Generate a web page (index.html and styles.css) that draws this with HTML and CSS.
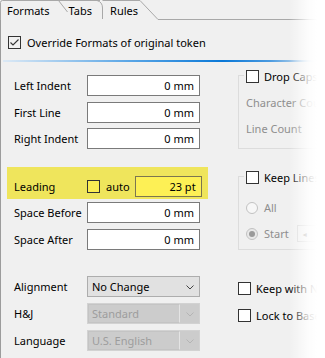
FILE: index.html
```html
<!DOCTYPE html>
<html>
<head>
<meta charset="utf-8">
<link rel="stylesheet" href="styles.css">
</head>
<body>
<div class="tabstrip">
  <svg class="tabshapes" width="325" height="20" viewBox="0 0 325 20">
    <path d="M56 0.5 H100" fill="none" stroke="#a8a8a8"/>
    <path d="M97 0.5 Q102.5 2 102.5 8 V19 M102.5 0.5 H140 L158 19.5 H325" fill="none" stroke="#a8a8a8"/>
    <path d="M0.5 20 V2.5 Q0.5 0.5 2.5 0.5 H58.5 L67.5 12" fill="none" stroke="#a8a8a8"/>
  </svg>
  <span class="tab t-formats">Formats</span>
  <span class="tab t-tabs">Tabs</span>
  <span class="tab t-rules">Rules</span>
</div>
<div class="panel">
  <div class="override">
    <span class="cb"><svg width="11" height="11" viewBox="0 0 11 11"><polyline points="1.5,5.5 4,8 9.5,2.5" fill="none" stroke="#333" stroke-width="1.1"/></svg></span>
    <span>Override Formats of original token</span>
  </div>
  <div class="sep"></div>
  <div class="cols">
    <div class="left">
      <div class="rows">
        <div class="row"><span class="lbl">Left Indent</span><span class="inp">0 mm</span></div>
        <div class="row"><span class="lbl">First Line</span><span class="inp">0 mm</span></div>
        <div class="row"><span class="lbl">Right Indent</span><span class="inp">0 mm</span></div>
      </div>
      <div class="leading">
        <span class="lbl">Leading</span>
        <span class="cb ycb"></span>
        <span class="auto">auto</span>
        <span class="inp yinp">23 pt</span>
      </div>
      <div class="rows after-lead">
        <div class="row"><span class="lbl">Space Before</span><span class="inp">0 mm</span></div>
        <div class="row"><span class="lbl">Space After</span><span class="inp">0 mm</span></div>
      </div>
      <div class="rows selects">
        <div class="row"><span class="lbl">Alignment</span><span class="sel"><span class="seltxt">No Change</span><span class="arrow"><svg width="8" height="5" viewBox="0 0 8 5"><polyline points="0.5,0.5 4,4 7.5,0.5" fill="none" stroke="#444"/></svg></span></span></div>
        <div class="row"><span class="lbl">H&amp;J</span><span class="sel dis"><span class="seltxt">Standard</span><span class="arrow"><svg width="8" height="5" viewBox="0 0 8 5"><polyline points="0.5,0.5 4,4 7.5,0.5" fill="none" stroke="#b4b4b4"/></svg></span></span></div>
        <div class="row"><span class="lbl">Language</span><span class="sel dis"><span class="seltxt">U.S. English</span><span class="arrow"><svg width="8" height="5" viewBox="0 0 8 5"><polyline points="0.5,0.5 4,4 7.5,0.5" fill="none" stroke="#b4b4b4"/></svg></span></span></div>
      </div>
    </div>
    <div class="right">
      <div class="group">
        <div class="legend"><span class="cb"></span><span>Drop Caps</span></div>
        <div class="gline first dim">Character Count</div>
        <div class="gline second dim">Line Count</div>
      </div>
      <div class="group g2">
        <div class="legend"><span class="cb"></span><span>Keep Lines Together</span></div>
        <div class="radio-row r-all"><span class="radio"></span><span class="dim">All</span></div>
        <div class="radio-row r-start"><span class="radio on"></span><span class="dim">Start</span><span class="spin"><span class="spinarrow">&#9666;</span></span></div>
      </div>
      <div class="chkline k1"><span class="cb"></span><span>Keep with Next</span></div>
      <div class="chkline k2"><span class="cb"></span><span>Lock to Baseline Grid</span></div>
    </div>
  </div>
</div>
<div class="fade"></div>
</body>
</html>
```
FILE: styles.css
```css
html, body {
  margin: 0;
  padding: 0;
}
body {
  width: 325px;
  height: 358px;
  overflow: hidden;
  position: relative;
  background: #f0f0f0;
  font-family: "Noto Sans", "DejaVu Sans", sans-serif;
  font-size: 11px;
  line-height: 15px;
  color: #000;
}
.tabstrip {
  position: relative;
  height: 20px;
  display: flex;
  align-items: flex-start;
}
.tabshapes {
  position: absolute;
  left: 0;
  top: 0;
}
.tab {
  position: relative;
  padding-top: 3px;
}
.t-formats { margin-left: 7px; }
.t-tabs { margin-left: 19px; }
.t-rules { margin-left: 18px; }

.panel {
  border-left: 1px solid #9c9c9c;
  border-bottom: 1px solid #9c9c9c;
  height: 335px;
  padding-top: 16px;
  box-sizing: content-box;
}
.override {
  margin-left: 7px;
  height: 13px;
  display: flex;
  align-items: center;
  gap: 6px;
}
.cb {
  width: 13px;
  height: 13px;
  box-sizing: border-box;
  border: 1px solid #333;
  background: #fff;
  display: inline-flex;
  align-items: center;
  justify-content: center;
  flex: none;
}
.override .cb { background: #f0f0f0; }
.sep {
  margin: 11px 0 0 2px;
  width: 314px;
  height: 2px;
  background: linear-gradient(to right, #dce9f5 0%, #5aa6e6 40%, #0a78d7 70%, #4a9ae0 85%, #f0f0f0 100%);
}
.cols {
  display: flex;
  margin-top: 13px;
}
.left {
  margin-left: 6px;
  width: 201px;
  flex: none;
}
.rows {
  display: flex;
  flex-direction: column;
  gap: 5.5px;
}
.row {
  display: flex;
  align-items: center;
  height: 21px;
  padding-left: 7px;
}
.lbl {
  width: 73px;
  flex: none;
}
.inp {
  width: 113px;
  height: 21px;
  box-sizing: border-box;
  border: 1px solid #7a7a7a;
  background: #fff;
  text-align: right;
  padding-right: 5px;
  line-height: 19px;
}
.leading {
  margin-top: 18px;
  background: #efe55c;
  height: 32px;
  box-sizing: border-box;
  padding: 9px 0 2px 7px;
  display: flex;
  align-items: center;
}
.leading .lbl { width: 73px; }
.ycb {
  background: #fbee52;
  border-color: #333;
}
.auto { margin-left: 6px; }
.yinp {
  margin-left: 5px;
  width: 67px;
  background: #fdf055;
  border-color: #7c7650;
}
.after-lead { margin-top: 3px; gap: 6px; }
.selects { margin-top: 26px; gap: 6px; }
.sel {
  width: 113px;
  height: 21px;
  box-sizing: border-box;
  border: 1px solid #adadad;
  background: #e1e1e1;
  display: flex;
  align-items: stretch;
}
.seltxt {
  flex: 1;
  padding-left: 4px;
  line-height: 19px;
}
.arrow {
  width: 19px;
  display: flex;
  align-items: center;
  justify-content: center;
  padding-top: 1px;
}
.sel.dis {
  border-color: #d2d2d2;
  background: #cccccc;
  color: #9d9d9d;
}
.sel.dis .seltxt {
  border: 1px solid #c4c4c4;
  border-right: 1px solid #e4e4e4;
  padding-left: 3px;
  line-height: 17px;
}

.right {
  margin-left: 30px;
  width: 87px;
  flex: none;
  overflow: hidden;
  white-space: nowrap;
}
.group {
  border: 1px solid #dcdcdc;
  width: 150px;
  height: 74px;
  box-sizing: border-box;
  padding-left: 7px;
}
.legend {
  display: flex;
  align-items: center;
  gap: 5px;
  height: 13px;
  margin-top: -6px;
  margin-left: -2px;
  padding-left: 2px;
  width: max-content;
  padding-right: 3px;
  background: #f0f0f0;
}
.right .group:first-child { margin-top: 6px; }
.cols { margin-top: 7px; }
.left { margin-top: 6px; }
.gline { color: #8e8e8e; }
.gline.first { margin-top: 12px; }
.gline.second { margin-top: 11px; }
.dim { color: #8e8e8e; }
.g2 {
  margin-top: 27px;
}
.radio-row {
  display: flex;
  align-items: center;
  gap: 6px;
}
.r-all { margin-top: 16px; height: 15px; }
.r-start { margin-top: 10px; height: 17px; }
.radio {
  width: 12px;
  height: 12px;
  box-sizing: border-box;
  border-radius: 50%;
  border: 1px solid #c2c2c2;
  background: #f7f7f7;
  display: inline-flex;
  align-items: center;
  justify-content: center;
  flex: none;
}
.radio.on { background: #e8e8e8; }
.radio.on::after {
  content: "";
  width: 6px;
  height: 6px;
  border-radius: 50%;
  background: #9a9a9a;
}
.spin {
  margin-left: 2px;
  width: 60px;
  height: 17px;
  box-sizing: border-box;
  border: 1px solid #d9d9d9;
  background: #f0f0f0;
  display: flex;
  align-items: center;
  padding-left: 5px;
  flex: none;
}
.spinarrow {
  font-size: 8px;
  color: #a0a0a0;
  line-height: 8px;
}
.chkline {
  display: flex;
  align-items: center;
  gap: 5px;
  height: 13px;
}
.k1 { margin-top: 32px; }
.k2 { margin-top: 14px; }

.fade {
  position: absolute;
  top: 0;
  right: 0;
  width: 36px;
  height: 358px;
  background: linear-gradient(to right, rgba(255,255,255,0) 0px, rgba(255,255,255,0.85) 20px, #fff 28px);
}
```
